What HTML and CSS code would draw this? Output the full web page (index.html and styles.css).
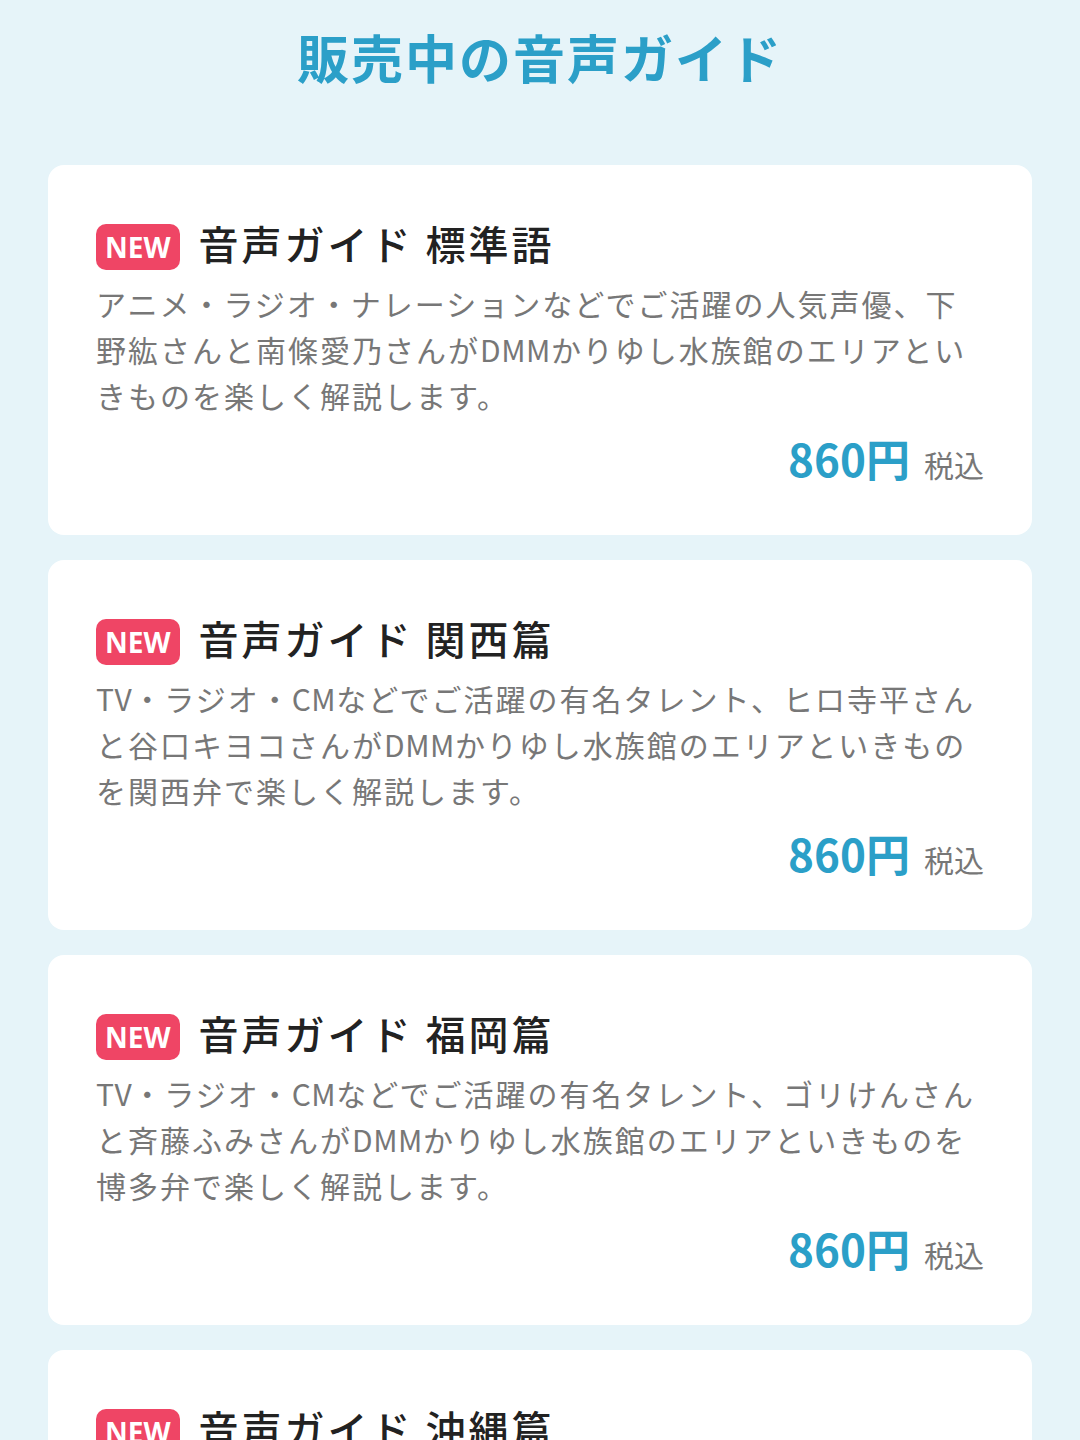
FILE: index.html
```html
<!DOCTYPE html>
<html lang="ja">
<head>
  <meta charset="UTF-8">
  <meta name="viewport" content="width=device-width, initial-scale=1.0">
  <title>販売中の音声ガイド</title>
  <link rel="stylesheet" href="styles.css">
</head>
<body>
  <div class="guide-container">
    <h1 class="guide-title">販売中の音声ガイド</h1>
    <div class="guide-list">
      <div class="guide-item">
        <div class="guide-item-hd">
          <span class="guide-badge">NEW</span>
          <span class="guide-name">音声ガイド 標準語</span>
        </div>
        <p class="guide-desc">アニメ・ラジオ・ナレーションなどでご活躍の人気声優、下野紘さんと南條愛乃さんが<span class="latin">DMM</span>かりゆし水族館のエリアといきものを楽しく解説します。</p>
        <div class="guide-price"><span class="price-num">860円</span><span class="price-tax">税込</span></div>
      </div>
      <div class="guide-item">
        <div class="guide-item-hd">
          <span class="guide-badge">NEW</span>
          <span class="guide-name">音声ガイド 関西篇</span>
        </div>
        <p class="guide-desc"><span class="latin">TV</span>・ラジオ・<span class="latin">CM</span>などでご活躍の有名タレント、ヒロ寺平さんと谷口キヨコさんが<span class="latin">DMM</span>かりゆし水族館のエリアといきものを関西弁で楽しく解説します。</p>
        <div class="guide-price"><span class="price-num">860円</span><span class="price-tax">税込</span></div>
      </div>
      <div class="guide-item">
        <div class="guide-item-hd">
          <span class="guide-badge">NEW</span>
          <span class="guide-name">音声ガイド 福岡篇</span>
        </div>
        <p class="guide-desc"><span class="latin">TV</span>・ラジオ・<span class="latin">CM</span>などでご活躍の有名タレント、ゴリけんさんと斉藤ふみさんが<span class="latin">DMM</span>かりゆし水族館のエリアといきものを博多弁で楽しく解説します。</p>
        <div class="guide-price"><span class="price-num">860円</span><span class="price-tax">税込</span></div>
      </div>
      <div class="guide-item">
        <div class="guide-item-hd">
          <span class="guide-badge">NEW</span>
          <span class="guide-name">音声ガイド 沖縄篇</span>
        </div>
        <p class="guide-desc"><span class="latin">TV</span>・ラジオ・<span class="latin">CM</span>などでご活躍の有名タレントが<span class="latin">DMM</span>かりゆし水族館のエリアといきものを沖縄の言葉で楽しく解説します。</p>
        <div class="guide-price"><span class="price-num">860円</span><span class="price-tax">税込</span></div>
      </div>
    </div>
  </div>
</body>
</html>
```

FILE: styles.css
```css
*{
  margin: 0;
  padding: 0;
  box-sizing: border-box;
}
body{
  background: #e6f4f9;
  font-family: "Noto Sans CJK JP", "Noto Sans", sans-serif;
  color: #222;
}
.guide-container{
  padding: 17px 48px 40px;
}
.guide-title{
  font-size: 52px;
  line-height: 80px;
  font-weight: 700;
  text-align: center;
  color: #2b9fc8;
  letter-spacing: 2px;
  margin-bottom: 68px;
}
.guide-list{
  display: flex;
  flex-direction: column;
  gap: 25px;
}
.guide-item{
  background: #fff;
  border-radius: 16px;
  padding: 50px 48px 53px;
}
.guide-item-hd{
  display: flex;
  align-items: center;
  height: 56px;
}
.guide-badge{
  display: inline-block;
  height: 46px;
  line-height: 46px;
  padding: 0 9px;
  margin-right: 19px;
  margin-top: 8px;
  border-radius: 10px;
  background: #ef4565;
  color: #fff;
  font-family: "Open Sans", "Noto Sans", sans-serif;
  font-size: 28px;
  font-weight: 700;
}
.guide-name{
  font-size: 40px;
  font-weight: 500;
  color: #222;
  letter-spacing: 3px;
}
.guide-desc{
  margin-top: 9px;
  font-size: 30px;
  line-height: 46px;
  color: #777;
  letter-spacing: 2px;
}
.guide-desc .latin{
  letter-spacing: 0.5px;
}
.guide-price{
  margin-top: 8px;
  height: 56px;
  display: flex;
  justify-content: flex-end;
  align-items: baseline;
}
.price-num{
  font-size: 44px;
  font-weight: 700;
  color: #2b9fc8;
}
.price-tax{
  margin-left: 14px;
  font-size: 30px;
  color: #777;
}
```
